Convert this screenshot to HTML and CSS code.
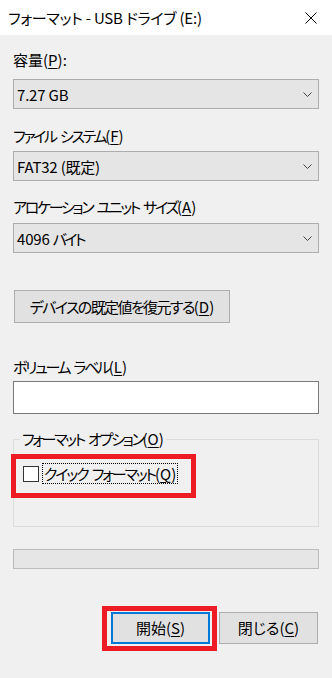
FILE: index.html
```html
<!DOCTYPE html>
<html lang="ja">
<head>
    <meta charset="UTF-8">
    <meta name="viewport" content="width=device-width, initial-scale=1.0">
    <title>フォーマット - USB ドライブ (E:)</title>
    <link rel="stylesheet" href="styles.css">
</head>
<body>
    <div class="window">
        <div class="titlebar">
            <span class="title">フォーマット - USB ドライブ (E:)</span>
            <svg class="close" width="12" height="12" viewBox="0 0 12 12">
                <path d="M0.5 0.5 L11.5 11.5 M11.5 0.5 L0.5 11.5" stroke="#000" stroke-width="1" fill="none"/>
            </svg>
        </div>

        <div class="content">
            <div class="label label-capacity">容量<span class="key">(<u>P</u>):</span></div>
            <div class="combo combo-capacity">
                <span>7.27 GB</span>
                <svg class="chevron" width="9" height="5" viewBox="0 0 9 5"><path d="M0.5 0.5 L4.5 4.5 L8.5 0.5" stroke="#444" fill="none"/></svg>
            </div>

            <div class="label label-fs">ファイル システム<span class="key">(<u>F</u>)</span></div>
            <div class="combo combo-fs">
                <span>FAT32 (既定)</span>
                <svg class="chevron" width="9" height="5" viewBox="0 0 9 5"><path d="M0.5 0.5 L4.5 4.5 L8.5 0.5" stroke="#444" fill="none"/></svg>
            </div>

            <div class="label label-unit">アロケーション ユニット サイズ<span class="key">(<u>A</u>)</span></div>
            <div class="combo combo-unit">
                <span>4096 <span class="kana">バイト</span></span>
                <svg class="chevron" width="9" height="5" viewBox="0 0 9 5"><path d="M0.5 0.5 L4.5 4.5 L8.5 0.5" stroke="#444" fill="none"/></svg>
            </div>

            <button class="btn btn-restore">デバイスの既定値を復元する<span class="key">(<u>D</u>)</span></button>

            <div class="label label-volume">ボリューム ラベル<span class="key">(<u>L</u>)</span></div>
            <input type="text" class="textbox">

            <fieldset class="group">
                <legend>フォーマット オプション<span class="key">(<u>O</u>)</span></legend>
                <div class="check-row">
                    <span class="checkbox"></span>
                    <span class="check-label">クイック フォーマット<span class="key">(<u>Q</u>)</span></span>
                </div>
                <div class="mark mark-quick"></div>
            </fieldset>

            <div class="progress"></div>

            <div class="actions">
                <span class="start-wrap">
                    <button class="btn btn-action btn-default">開始<span class="key">(<u>S</u>)</span></button>
                    <span class="mark mark-start"></span>
                </span>
                <button class="btn btn-action">閉じる<span class="key">(<u>C</u>)</span></button>
            </div>
        </div>
    </div>
</body>
</html>
```

FILE: styles.css
```css
/* Global Styles */
* {
    margin: 0;
    padding: 0;
    box-sizing: border-box;
    font-feature-settings: "palt" 1;
}

body {
    font-family: 'Noto Sans CJK JP', 'Noto Sans', sans-serif;
    font-size: 15px;
    color: #000;
    background-color: #f0f0f0;
}

.window {
    width: 332px;
    height: 678px;
    background-color: #f0f0f0;
    overflow: hidden;
}

/* mnemonic key like (F) keeps normal spacing */
.key {
    letter-spacing: 0;
}

u {
    text-underline-offset: 2px;
    text-decoration-thickness: 1px;
}

/* Title bar */
.titlebar {
    height: 35px;
    background-color: #fff;
    display: flex;
    align-items: center;
    justify-content: space-between;
    padding: 0 15px 0 8px;
}

.title {
    line-height: 20px;
    letter-spacing: -0.2px;
}

.close {
    display: block;
}

/* Content */
.content {
    padding: 0 13px;
}

.label {
    line-height: 20px;
    letter-spacing: -2.3px;
    word-spacing: 3px;
}

.label-capacity { margin-top: 15px; letter-spacing: 0; }
.label-fs { margin-top: 17px; }
.label-unit { margin-top: 16px; }
.label-volume { margin-top: 34px; }

.combo {
    height: 30px;
    border: 1px solid #adadad;
    background-color: #e5e5e5;
    display: flex;
    align-items: center;
    justify-content: space-between;
    padding: 0 6px 0 3px;
    letter-spacing: -0.2px;
}

.combo .kana {
    letter-spacing: -2.5px;
}

.combo-capacity { margin-top: 9px; }
.combo-fs { margin-top: 5px; }
.combo-unit { margin-top: 6px; }

.chevron {
    display: block;
}

.btn {
    font-family: inherit;
    font-size: 15px;
    color: #000;
    background-color: #e1e1e1;
    border: 1px solid #adadad;
    line-height: 20px;
}

.btn-restore {
    display: block;
    margin: 37px 0 0 1px;
    width: 216px;
    height: 33px;
    letter-spacing: -1.6px;
}

.textbox {
    display: block;
    width: 100%;
    height: 33px;
    margin-top: 4px;
    border: 1px solid #7a7a7a;
    background-color: #fff;
}

/* Group box */
.group {
    position: relative;
    margin-top: 15px;
    height: 98px;
    border: 1px solid #dcdcdc;
    padding: 0 9px;
}

.group legend {
    margin-left: -3px;
    padding: 0 2px;
    line-height: 20px;
    letter-spacing: -2.3px;
    word-spacing: 3px;
}

.check-row {
    display: flex;
    align-items: center;
    margin-top: 14px;
}

.checkbox {
    width: 16px;
    height: 16px;
    border: 1px solid #333;
    background-color: #fff;
}

.check-label {
    margin-left: 3px;
    padding: 0 1px;
    line-height: 19px;
    border: 1px dotted #000;
    letter-spacing: -2.1px;
    word-spacing: 3px;
}

.mark {
    position: absolute;
    border: 5px solid #ed1c24;
}

.mark-quick {
    left: -3px;
    top: 5px;
    width: 185px;
    height: 44px;
}

/* Progress bar */
.progress {
    margin-top: 22px;
    height: 20px;
    border: 1px solid #bcbcbc;
    background-color: #e6e6e6;
}

/* Bottom buttons */
.actions {
    display: flex;
    justify-content: flex-end;
    gap: 9px;
    margin-top: 43px;
    padding-right: 1px;
}

.start-wrap {
    position: relative;
    display: block;
}

.btn-action {
    display: block;
    width: 99px;
    height: 32px;
}

.btn-default {
    border: 2px solid #0078d7;
}

.mark-start {
    left: -9px;
    top: -6px;
    right: -7px;
    bottom: -7px;
}
```
